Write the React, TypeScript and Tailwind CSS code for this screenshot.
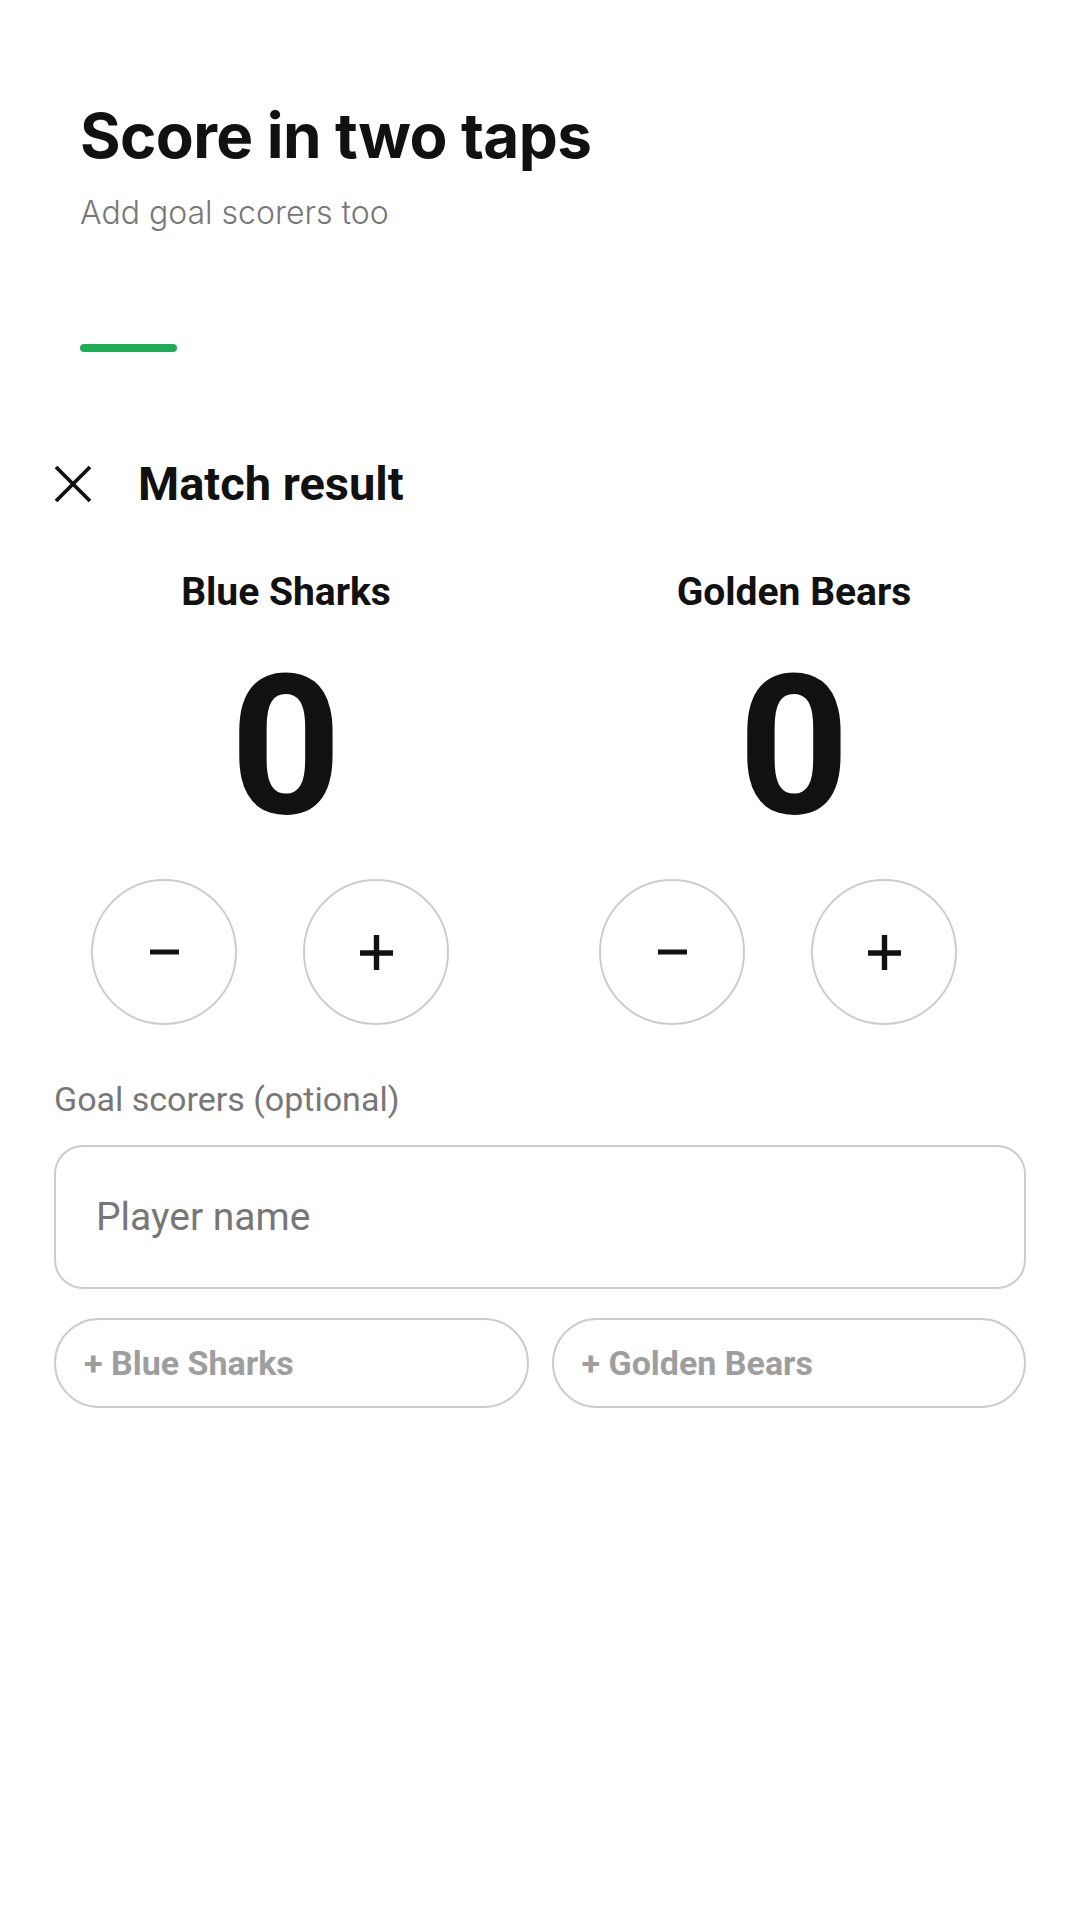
import { useState } from 'react';

const TEAMS = ['Blue Sharks', 'Golden Bears'];

function MinusIcon() {
  return (
    <svg width="29" height="30" viewBox="0 0 29 30" fill="none" stroke="#111111" strokeWidth="5">
      <path d="M0 15H29" />
    </svg>
  );
}

function PlusIcon() {
  return (
    <svg width="33" height="35" viewBox="0 0 33 35" fill="none" stroke="#111111" strokeWidth="5.4">
      <path d="M0 18H33M16.5 0V35" />
    </svg>
  );
}

function TeamColumn({ name, score, onChange }: { name: string; score: number; onChange: (n: number) => void }) {
  return (
    <div className="flex flex-col items-center">
      <div className="h-[39px] text-[39px] leading-none font-bold text-[#111111]">{name}</div>
      <div className="mt-[38px] h-[194px] text-[194px] leading-none font-bold text-[#111111]">{score}</div>
      <div className="mt-[35px] flex justify-center gap-[66px] pr-[32px]">
        <button
          onClick={() => onChange(Math.max(0, score - 1))}
          className="w-[146px] h-[146px] rounded-full border-2 border-[#cccccc] flex items-center justify-center"
        >
          <MinusIcon />
        </button>
        <button
          onClick={() => onChange(score + 1)}
          className="w-[146px] h-[146px] rounded-full border-2 border-[#cccccc] flex items-center justify-center"
        >
          <PlusIcon />
        </button>
      </div>
    </div>
  );
}

export default function App() {
  const [scores, setScores] = useState([0, 0]);
  const [player, setPlayer] = useState('');

  return (
    <div className="w-[1080px] min-h-[1920px] bg-white">
      <div className="px-[80px] pt-[105px] font-['Inter',sans-serif]">
        <h1 className="text-[62px] leading-none font-bold tracking-[-0.01em] text-[#111111]">Score in two taps</h1>
        <p className="mt-[30px] text-[32px] leading-none font-light text-[#777777]">Add goal scorers too</p>
        <div className="mt-[115px] w-[97px] h-[8px] rounded-full bg-[#1faa55]" />
      </div>

      <div className="px-[54px] font-['Roboto',sans-serif]">
        <div className="mt-[108px] flex items-center gap-[46px] h-[47px]">
          <button className="w-[38px] h-[38px] flex items-center justify-center">
            <svg width="38" height="38" viewBox="0 0 38 38" fill="none" stroke="#111111" strokeWidth="3.8">
              <path d="M2 2L36 36M36 2L2 36" />
            </svg>
          </button>
          <h2 className="text-[47px] leading-none font-bold text-[#111111]">Match result</h2>
        </div>

        <div className="mt-[66px] grid grid-cols-2 gap-[44px]">
          {TEAMS.map((t, i) => (
            <TeamColumn
              key={t}
              name={t}
              score={scores[i]}
              onChange={(n) => setScores((s) => s.map((v, j) => (j === i ? n : v)))}
            />
          ))}
        </div>

        <div className="mt-[57px] text-[34px] leading-none text-[#777777]">Goal scorers (optional)</div>
        <input
          value={player}
          onChange={(e) => setPlayer(e.target.value)}
          placeholder="Player name"
          className="mt-[29px] w-full h-[144px] rounded-[29px] border-2 border-[#cccccc] px-[40px] text-[39px] text-[#111111] placeholder:text-[#777777] outline-none"
        />
        <div className="mt-[29px] grid grid-cols-2 gap-[23px]">
          {TEAMS.map((t) => (
            <button
              key={t}
              className="h-[90px] rounded-full border-2 border-[#cccccc] px-[28px] text-left text-[34px] font-bold text-[#9e9e9e]"
            >
              + {t}
            </button>
          ))}
        </div>
      </div>
    </div>
  );
}
